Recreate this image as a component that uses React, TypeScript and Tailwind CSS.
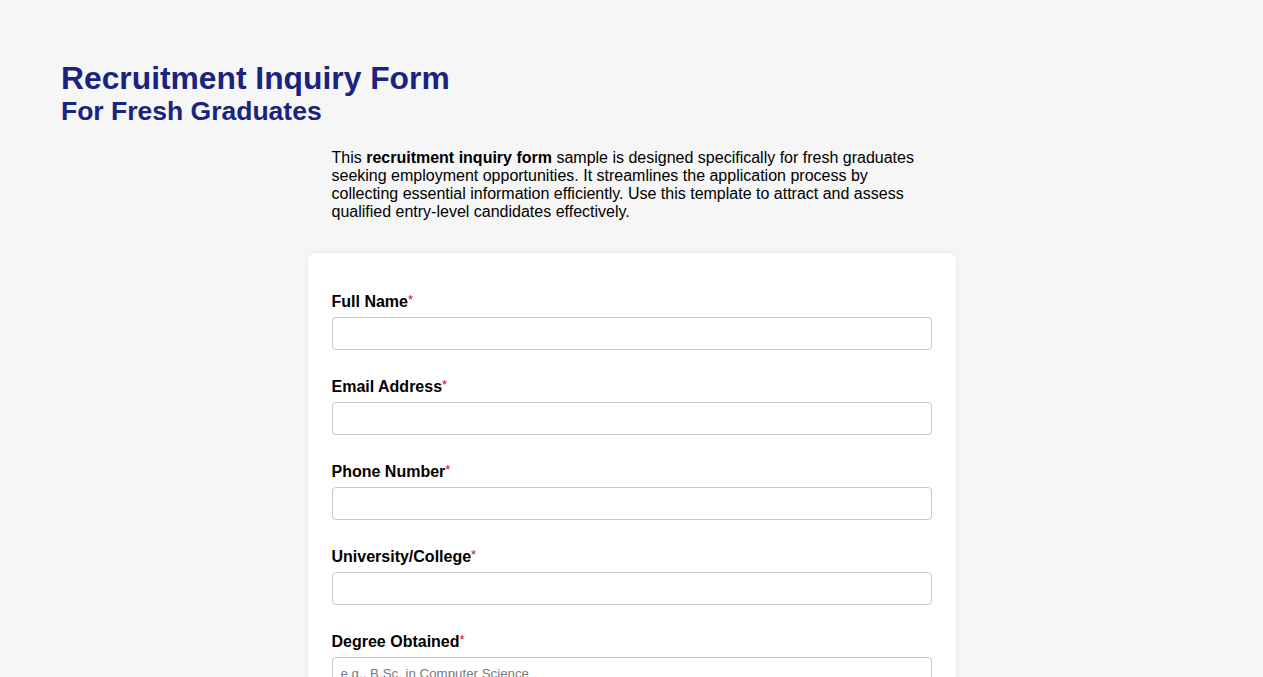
import React from "react";

const fields = [
  { label: "Full Name", placeholder: "" },
  { label: "Email Address", placeholder: "" },
  { label: "Phone Number", placeholder: "" },
  { label: "University/College", placeholder: "" },
  { label: "Degree Obtained", placeholder: "e.g., B.Sc. in Computer Science" },
  { label: "Graduation Year", placeholder: "" },
];

export default function App() {
  return (
    <div
      className="min-h-screen bg-[#f6f6f6] text-black"
      style={{ fontFamily: '"Liberation Sans", Arial, sans-serif' }}
    >
      <div className="px-[61px] pt-[62px]">
        <h1 className="text-[31.8px] font-bold leading-[32px] text-[#1a237e]">
          Recruitment Inquiry Form
        </h1>
        <h2 className="text-[26.5px] font-bold leading-[34px] text-[#1a237e]">
          For Fresh Graduates
        </h2>
      </div>
      <div className="mx-auto w-[648px]">
        <p className="mt-[21px] px-6 text-[16px] leading-[18px]">
          This <b>recruitment inquiry form</b> sample is designed specifically for fresh graduates
          seeking employment opportunities. It streamlines the application process by collecting
          essential information efficiently. Use this template to attract and assess qualified
          entry-level candidates effectively.
        </p>
        <div className="mt-[32px] rounded-lg bg-white px-6 pt-[40px] pb-6 shadow-[0_0_6px_rgba(0,0,0,0.08)]">
          {fields.map((f) => (
            <div key={f.label} className="mb-[28px]">
              <label className="mb-[6px] block h-[18px] text-[16px] font-bold leading-[18px]">
                {f.label}
                <span className="relative -top-[3px] text-[13px] font-normal leading-none text-[#e0001b]">*</span>
              </label>
              <input
                className="block h-[33px] w-full rounded border border-[#c8c8c8] bg-white px-2 text-[13.3px] placeholder:text-[#7a7a7a] outline-none"
                placeholder={f.placeholder}
              />
            </div>
          ))}
        </div>
      </div>
    </div>
  );
}
